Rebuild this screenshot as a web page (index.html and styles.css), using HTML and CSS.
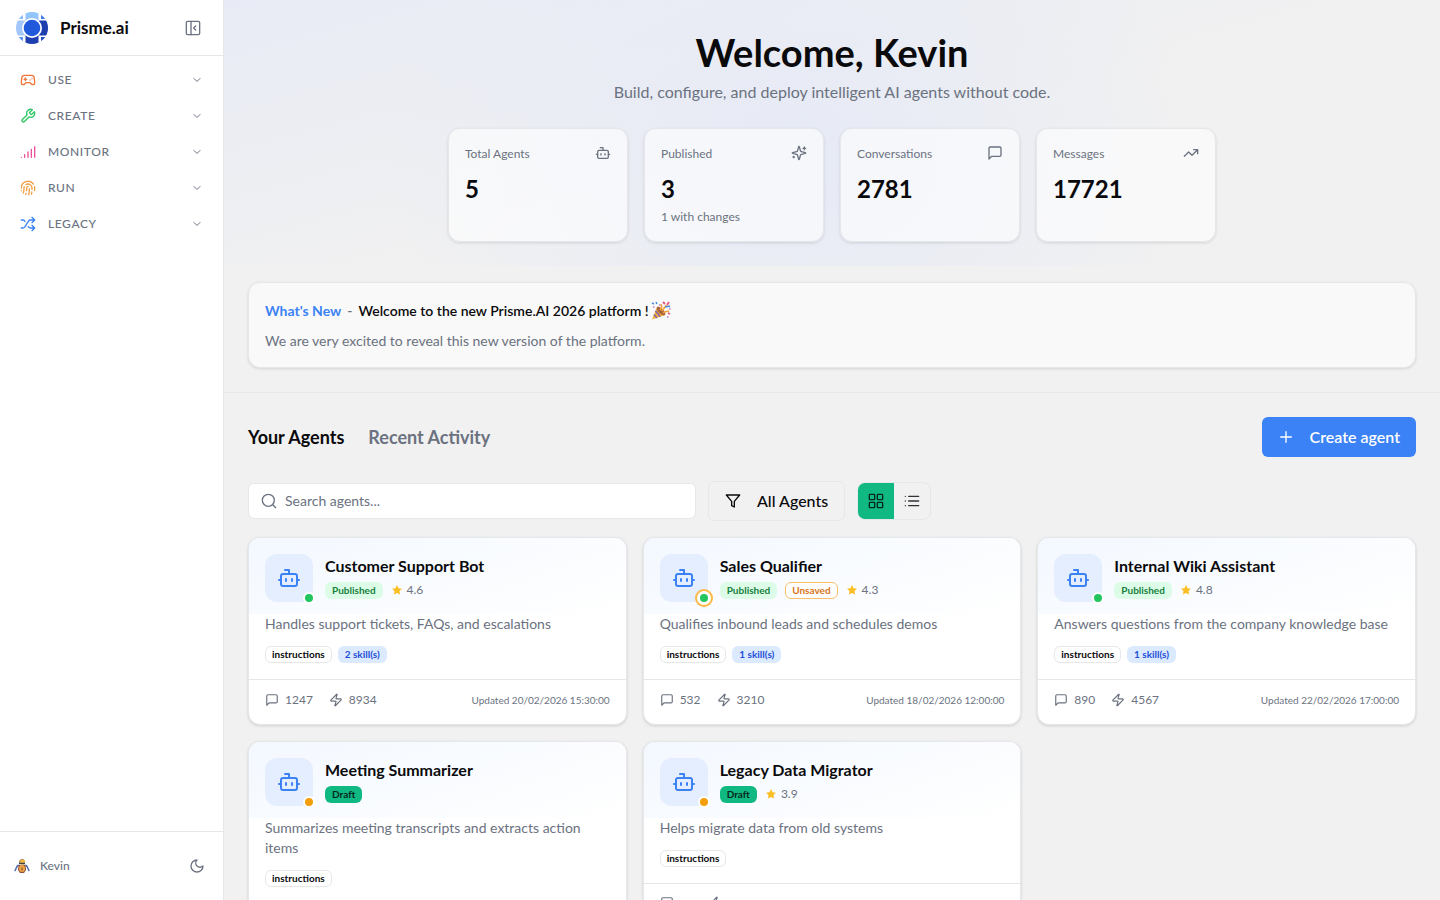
FILE: index.html
```html
<!DOCTYPE html>
<html lang="en">
<head>
<meta charset="utf-8">
<meta name="viewport" content="width=device-width, initial-scale=1">
<title>Prisme.ai</title>
<link rel="stylesheet" href="styles.css">
</head>
<body>
<svg class="sprite" aria-hidden="true">
  <symbol id="bot" viewBox="0 0 24 24"><path d="M12 8V4H8"/><rect width="16" height="12" x="4" y="8" rx="2"/><path d="M2 14h2M20 14h2M15 13v2M9 13v2"/></symbol>
  <symbol id="message" viewBox="0 0 24 24"><path d="M21 15a2 2 0 0 1-2 2H7l-4 4V5a2 2 0 0 1 2-2h14a2 2 0 0 1 2 2z"/></symbol>
  <symbol id="zap" viewBox="0 0 24 24"><path d="M4 14a1 1 0 0 1-.78-1.63l9.9-10.2a.5.5 0 0 1 .86.46l-1.92 6.02A1 1 0 0 0 13 10h7a1 1 0 0 1 .78 1.63l-9.9 10.2a.5.5 0 0 1-.86-.46l1.92-6.02A1 1 0 0 0 11 14z"/></symbol>
  <symbol id="star" viewBox="0 0 24 24"><path d="M12 2l3.1 6.3 6.9 1-5 4.9 1.200 6.800L12 17.800 5.800 21 7 14.200 2 9.300l6.900-1z" fill="currentColor"/></symbol>
  <symbol id="chevron" viewBox="0 0 24 24"><path d="m6 9 6 6 6-6"/></symbol>
</svg>
<div class="app">
  <aside class="sidebar">
    <div class="brand">
      <svg class="logo" viewBox="0 0 32 32" aria-hidden="true">
        <clipPath id="disc"><circle cx="16" cy="16" r="16"/></clipPath>
        <g clip-path="url(#disc)">
          <rect x="9.500" y="0" width="13" height="9" fill="#93c5fd"/>
          <rect x="0" y="8.500" width="9" height="15" fill="#a3c6fb"/>
          <rect x="23" y="8.500" width="9" height="15" fill="#1e3fae"/>
          <rect x="9.500" y="23" width="13" height="9" fill="#1e40af"/>
          <rect x="0" y="0" width="7" height="7" fill="#8ebcfb"/>
          <rect x="25" y="0" width="7" height="7" fill="#3f78e8"/>
          <rect x="0" y="25" width="7" height="7" fill="#5b93f2"/>
          <rect x="25" y="25" width="7" height="7" fill="#2450c4"/>
        </g>
        <circle cx="16" cy="16" r="10" fill="#fff"/>
        <circle cx="16" cy="16" r="8.300" fill="#2159dd"/>
      </svg>
      <span class="brand-name">Prisme.ai</span>
      <button class="icon-button" type="button" aria-label="Collapse sidebar"><svg class="icon" viewBox="0 0 24 24"><rect width="20" height="20" x="2" y="2" rx="2"/><path d="M9 2v20M16 15l-3-3 3-3"/></svg></button>
    </div>
    <nav class="nav">
      <button class="nav-item" type="button"><svg class="icon orange" viewBox="0 0 24 24"><path d="M6 11h4M8 9v4M15 12h.01M18 10h.01"/><path d="M17.320 5H6.680a4 4 0 0 0-3.978 3.590C2.604 9.416 2 14.456 2 16a3 3 0 0 0 3 3c1 0 1.500-.5 2-1l1.414-1.414A2 2 0 0 1 9.828 16h4.344a2 2 0 0 1 1.414.586L17 18c.5.5 1 1 2 1a3 3 0 0 0 3-3c0-1.545-.604-6.584-.7-7.410A4 4 0 0 0 17.320 5z"/></svg><span>USE</span><svg class="icon chevron"><use href="#chevron"/></svg></button>
      <button class="nav-item" type="button"><svg class="icon green" viewBox="0 0 24 24"><path d="M14.700 6.300a1 1 0 0 0 0 1.400l1.600 1.600a1 1 0 0 0 1.400 0l3.770-3.770a6 6 0 0 1-7.940 7.940l-6.910 6.910a2.120 2.120 0 0 1-3-3l6.910-6.910a6 6 0 0 1 7.940-7.940z"/></svg><span>CREATE</span><svg class="icon chevron"><use href="#chevron"/></svg></button>
      <button class="nav-item" type="button"><svg class="icon pink" viewBox="0 0 24 24"><path d="M2 20h.01M7 20v-4M12 20v-8M17 20V8M22 4v16"/></svg><span>MONITOR</span><svg class="icon chevron"><use href="#chevron"/></svg></button>
      <button class="nav-item" type="button"><svg class="icon amber" viewBox="0 0 24 24"><path d="M12 10a2 2 0 0 0-2 2c0 1.020-.1 2.510-.26 4M14 13.120c0 2.380 0 6.380-1 8.880M17.290 21.020c.12-.6.430-2.300.5-3.020M2 12a10 10 0 0 1 18-6M2 16h.01M21.800 16c.2-2 .131-5.354 0-6M5 19.500C5.500 18 6 15 6 12a6 6 0 0 1 .34-2M8.650 22c.21-.66.450-1.320.570-2M9 6.800a6 6 0 0 1 9 5.200v2"/></svg><span>RUN</span><svg class="icon chevron"><use href="#chevron"/></svg></button>
      <button class="nav-item" type="button"><svg class="icon blue" viewBox="0 0 24 24"><path d="m18 14 4 4-4 4M18 2l4 4-4 4M2 18h1.973a4 4 0 0 0 3.300-1.700l5.454-8.600a4 4 0 0 1 3.300-1.700H22M2 6h1.972a4 4 0 0 1 3.600 2.200M22 18h-6.041a4 4 0 0 1-3.300-1.800l-.359-.45"/></svg><span>LEGACY</span><svg class="icon chevron"><use href="#chevron"/></svg></button>
    </nav>
    <div class="account">
      <svg class="avatar" viewBox="0 0 16 16" aria-hidden="true"><path d="M5 5C5 2 6.500 1 8.200 1S11 2.500 11 5z" fill="#8a7352"/><circle cx="8.500" cy="4" r="2.600" fill="#f2b63d"/><path d="M5 5.500h6" stroke="#3d4250" stroke-width="1.500"/><path d="M4.500 7C2 8 2.500 11 .7 13M11.500 7c2.500 1 2 4 3.800 6" stroke="#4866ae" stroke-width="1.400" fill="none"/><path d="M4.500 7h7l.5 5-2 3H6l-2-3z" fill="#8b4f3e"/><ellipse cx="8" cy="10.500" rx="3" ry="3.500" fill="#f2a642"/><path d="M8 9.500v3" stroke="#743c37"/></svg>
      <span class="account-name">Kevin</span>
      <button class="icon-button" type="button" aria-label="Dark mode"><svg class="icon" viewBox="0 0 24 24"><path d="M12 3a6 6 0 0 0 9 9 9 9 0 1 1-9-9Z"/></svg></button>
    </div>
  </aside>
  <main class="main">
    <header class="hero">
      <h1>Welcome, Kevin</h1>
      <p class="tagline">Build, configure, and deploy intelligent AI agents without code.</p>
      <div class="stats">
        <section class="stat"><div class="stat-head"><span>Total Agents</span><svg class="icon"><use href="#bot"/></svg></div><strong>5</strong></section>
        <section class="stat"><div class="stat-head"><span>Published</span><svg class="icon" viewBox="0 0 24 24"><path d="M9.937 15.500A2 2 0 0 0 8.500 14.063l-6.135-1.582a.5.5 0 0 1 0-.962L8.500 9.936A2 2 0 0 0 9.937 8.500l1.582-6.135a.5.5 0 0 1 .963 0L14.063 8.500A2 2 0 0 0 15.500 9.937l6.135 1.581a.5.5 0 0 1 0 .964L15.500 14.063a2 2 0 0 0-1.437 1.437l-1.582 6.135a.5.5 0 0 1-.963 0zM20 3v4M22 5h-4M4 17v2M5 18H3"/></svg></div><strong>3</strong><small>1 with changes</small></section>
        <section class="stat"><div class="stat-head"><span>Conversations</span><svg class="icon"><use href="#message"/></svg></div><strong>2781</strong></section>
        <section class="stat"><div class="stat-head"><span>Messages</span><svg class="icon" viewBox="0 0 24 24"><path d="m22 7-8.500 8.500-5-5L2 17M16 7h6v6"/></svg></div><strong>17721</strong></section>
      </div>
    </header>
    <div class="news-wrap">
      <section class="news">
        <h2><span class="news-label">What's New</span><span class="dash">-</span><span>Welcome to the new Prisme.AI 2026 platform !</span><svg class="party" viewBox="0 0 20 20" role="img" aria-label="Party popper"><path d="M6 6 1 18.500 14 14z" fill="#f9b52f"/><path d="m4.500 9.800 4.800 5.900M3 13.500l3 3.500" stroke="#8b62a8" stroke-width="1.800"/><ellipse cx="10" cy="10" rx="2.600" ry="5.600" transform="rotate(-45 10 10)" fill="#a8653f"/><path d="M9 9c2-2 2-4 1-6M11 10c1-3 4-3 4-6M12 12c2-2 4-1 6-2" stroke="#f5a33c" stroke-width="1.600" fill="none"/><path d="M1 2l2 1M5 1l1 2M14 6c2-1 3 0 5-1" stroke="#4c8fd8" stroke-width="1.600" fill="none"/><path d="M12 1l2 2M18 1l-2 3M17 12l2 1" stroke="#e2557c" stroke-width="1.800"/><path d="M2 6h1.500M16 16h1.500M8 4h1.500M18 8h1.500" stroke="#c77cc5" stroke-width="1.500"/></svg></h2>
        <p>We are very excited to reveal this new version of the platform.</p>
      </section>
    </div>
    <section class="content">
      <div class="heading-row">
        <div class="tabs"><button class="tab active" type="button">Your Agents</button><button class="tab" type="button">Recent Activity</button></div>
        <button class="create" type="button"><svg class="icon" viewBox="0 0 24 24"><path d="M4 12h16M12 4v16"/></svg>Create agent</button>
      </div>
      <div class="toolbar">
        <label class="search"><svg class="icon" viewBox="0 0 24 24"><circle cx="11" cy="11" r="9"/><path d="m22 22-4.300-4.300"/></svg><input type="text" placeholder="Search agents..." aria-label="Search agents"></label>
        <button class="filter" type="button"><svg class="icon" viewBox="0 0 24 24"><path d="M22 3H2l8 9.460V19l4 2v-8.540z"/></svg>All Agents</button>
        <div class="views">
          <button class="view on" type="button" aria-label="Grid view"><svg class="icon" viewBox="0 0 24 24"><rect x="2" y="2" width="8" height="8" rx="1"/><rect x="14" y="2" width="8" height="8" rx="1"/><rect x="14" y="14" width="8" height="8" rx="1"/><rect x="2" y="14" width="8" height="8" rx="1"/></svg></button>
          <button class="view" type="button" aria-label="List view"><svg class="icon" viewBox="0 0 24 24"><path d="M2 5h.01M2 12h.01M2 19h.01M7 5h15M7 12h15M7 19h15"/></svg></button>
        </div>
      </div>
      <div class="grid">
        <article class="card">
          <div class="card-head"><div class="bot"><svg class="icon"><use href="#bot"/></svg><i class="dot live"></i></div><div class="card-title"><h3>Customer Support Bot</h3><div class="meta"><span class="badge published">Published</span><span class="rating"><svg class="star"><use href="#star"/></svg>4.6</span></div></div></div>
          <div class="card-body"><p>Handles support tickets, FAQs, and escalations</p><div class="tags"><span class="badge outline">instructions</span><span class="badge skill">2 skill(s)</span></div></div>
          <footer class="card-foot"><span class="count"><svg class="icon"><use href="#message"/></svg>1247</span><span class="count"><svg class="icon"><use href="#zap"/></svg>8934</span><time>Updated 20/02/2026 15:30:00</time></footer>
        </article>
        <article class="card">
          <div class="card-head"><div class="bot"><svg class="icon"><use href="#bot"/></svg><i class="dot live changed"></i></div><div class="card-title"><h3>Sales Qualifier</h3><div class="meta"><span class="badge published">Published</span><span class="badge unsaved">Unsaved</span><span class="rating"><svg class="star"><use href="#star"/></svg>4.3</span></div></div></div>
          <div class="card-body"><p>Qualifies inbound leads and schedules demos</p><div class="tags"><span class="badge outline">instructions</span><span class="badge skill">1 skill(s)</span></div></div>
          <footer class="card-foot"><span class="count"><svg class="icon"><use href="#message"/></svg>532</span><span class="count"><svg class="icon"><use href="#zap"/></svg>3210</span><time>Updated 18/02/2026 12:00:00</time></footer>
        </article>
        <article class="card">
          <div class="card-head"><div class="bot"><svg class="icon"><use href="#bot"/></svg><i class="dot live"></i></div><div class="card-title"><h3>Internal Wiki Assistant</h3><div class="meta"><span class="badge published">Published</span><span class="rating"><svg class="star"><use href="#star"/></svg>4.8</span></div></div></div>
          <div class="card-body"><p>Answers questions from the company knowledge base</p><div class="tags"><span class="badge outline">instructions</span><span class="badge skill">1 skill(s)</span></div></div>
          <footer class="card-foot"><span class="count"><svg class="icon"><use href="#message"/></svg>890</span><span class="count"><svg class="icon"><use href="#zap"/></svg>4567</span><time>Updated 22/02/2026 17:00:00</time></footer>
        </article>
        <article class="card">
          <div class="card-head"><div class="bot"><svg class="icon"><use href="#bot"/></svg><i class="dot"></i></div><div class="card-title"><h3>Meeting Summarizer</h3><div class="meta"><span class="badge draft">Draft</span></div></div></div>
          <div class="card-body"><p>Summarizes meeting transcripts and extracts action items</p><div class="tags"><span class="badge outline">instructions</span></div></div>
          <footer class="card-foot"><span class="count"><svg class="icon"><use href="#message"/></svg></span><span class="count"><svg class="icon"><use href="#zap"/></svg></span></footer>
        </article>
        <article class="card">
          <div class="card-head"><div class="bot"><svg class="icon"><use href="#bot"/></svg><i class="dot"></i></div><div class="card-title"><h3>Legacy Data Migrator</h3><div class="meta"><span class="badge draft">Draft</span><span class="rating"><svg class="star"><use href="#star"/></svg>3.9</span></div></div></div>
          <div class="card-body"><p>Helps migrate data from old systems</p><div class="tags"><span class="badge outline">instructions</span></div></div>
          <footer class="card-foot"><span class="count count-empty"><svg class="icon"><use href="#message"/></svg></span><span class="count"><svg class="icon"><use href="#zap"/></svg></span></footer>
        </article>
      </div>
    </section>
  </main>
</div>
</body>
</html>
```
FILE: styles.css
```css
*, *::before, *::after { box-sizing: border-box; }
body { margin: 0; font-family: Lato, "Liberation Sans", sans-serif; font-size: 14px; line-height: 20px; color: #0a0a0c; background: #f1f1f1; }
h1, h2, h3, p { margin: 0; }
button, input { font: inherit; color: inherit; }
button { padding: 0; border: 0; background: none; cursor: pointer; }
.sprite { position: absolute; width: 0; height: 0; }
.icon { flex: none; width: 16px; height: 16px; fill: none; stroke: currentColor; stroke-width: 2; stroke-linecap: round; stroke-linejoin: round; }
.app { display: flex; height: 100vh; }

.sidebar { display: flex; flex-direction: column; flex: none; width: 224px; background: #fff; border-right: 1px solid #e5e7eb; }
.brand { display: flex; align-items: center; gap: 12px; height: 56px; padding: 0 22px 0 16px; border-bottom: 1px solid #e5e7eb; }
.logo { width: 32px; height: 32px; }
.brand-name { flex: 1; font-size: 17px; font-weight: 700; }
.icon-button { display: flex; color: #6b7280; }
.nav { flex: 1; padding: 6px 8px; }
.nav-item { display: flex; align-items: center; gap: 12px; width: 100%; height: 36px; padding: 0 12px; color: #6b7280; font-size: 12px; font-weight: 500; letter-spacing: 0.05em; text-align: left; }
.nav-item span { flex: 1; }
.nav-item .chevron { width: 12px; height: 12px; }
.orange { color: #f07438; }
.green { color: #2fc565; }
.pink { color: #e8519a; }
.amber { color: #f2a044; }
.blue { color: #3b82f6; }
.account { display: flex; align-items: center; gap: 10px; height: 69px; padding: 0 18px 0 14px; border-top: 1px solid #e5e7eb; color: #6b7280; }
.avatar { width: 16px; height: 16px; }
.account-name { flex: 1; font-size: 12px; font-weight: 500; }

.main { flex: 1; min-width: 0; overflow-y: auto; scrollbar-width: none; }
.hero { padding: 32px 24px 24px; text-align: center; background: linear-gradient(165deg, #e9ecf6 0%, #f1f1f1 40%, #f1f1f1 100%); background: radial-gradient(ellipse 34% 110% at 47% 60%, #e6eaf6 0%, rgba(230, 234, 246, 0) 100%), linear-gradient(165deg, #e8ebf5 0%, #f1f1f1 55%); }
h1 { font-size: 38px; line-height: 40px; font-weight: 700; }
.tagline { margin-top: 8px; font-size: 16px; line-height: 24px; color: #6b7280; }
.stats { display: grid; grid-template-columns: repeat(4, 1fr); gap: 16px; max-width: 768px; margin: 24px auto 0; text-align: left; }
.stat { padding: 16px; min-height: 114px; border: 1px solid #e5e7eb; border-radius: 12px; background: rgba(255, 255, 255, 0.6); box-shadow: 0 1px 3px rgba(0, 0, 0, 0.12); }
.stat-head { display: flex; justify-content: space-between; height: 20px; font-size: 12px; line-height: 18px; color: #6b7280; }
.stat strong { display: block; margin-top: 8px; font-size: 24px; line-height: 32px; }
.stat small { display: block; margin-top: 4px; font-size: 12px; line-height: 16px; color: #6b7280; }
.news-wrap { padding: 16px 24px 24px; border-bottom: 1px solid #e5e7eb; }
.news { padding: 16px; border: 1px solid #e5e7eb; border-radius: 12px; background: #f9f9f9; box-shadow: 0 1px 3px rgba(0, 0, 0, 0.12); }
.news h2 { display: flex; align-items: center; font-size: 14px; line-height: 24px; font-weight: 600; }
.news-label { color: #3b82f6; font-weight: 700; }
.dash { margin: 0 6px; color: #6b7280; }
.party { width: 20px; height: 20px; margin-left: 2px; }
.news p { margin-top: 8px; color: #6b7280; }

.content { padding: 24px; }
.heading-row { display: flex; align-items: center; justify-content: space-between; }
.tabs { display: flex; gap: 24px; }
.tab { font-size: 18px; line-height: 28px; font-weight: 700; color: #6b7280; }
.tab.active { color: #0a0a0c; }
.create { display: flex; align-items: center; gap: 16px; height: 40px; padding: 0 16px; border-radius: 6px; background: #3b82f6; color: #fff; font-size: 16px; font-weight: 600; }
.toolbar { display: flex; align-items: center; gap: 12px; margin: 24px 0 16px; }
.search { display: flex; align-items: center; gap: 8px; flex: 0 1 448px; height: 36px; padding: 0 12px; border: 1px solid #e5e7eb; border-radius: 6px; background: #fff; color: #6b7280; }
.search input { flex: 1; min-width: 0; padding: 0; border: 0; outline: 0; background: none; }
.search input::placeholder { color: #6b7280; opacity: 1; }
.filter { display: flex; align-items: center; gap: 16px; height: 40px; padding: 0 16px; border: 1px solid #e5e7eb; border-radius: 6px; font-size: 16px; font-weight: 500; }
.views { display: flex; overflow: hidden; border: 1px solid #e5e7eb; border-radius: 8px; }
.view { display: flex; align-items: center; justify-content: center; width: 36px; height: 36px; color: #303236; }
.view.on { background: #10b981; color: #06281e; }

.grid { display: grid; grid-template-columns: repeat(3, minmax(0, 1fr)); gap: 16px; }
.card { overflow: hidden; border: 1px solid #e5e7eb; border-radius: 12px; background: #fff; box-shadow: 0 1px 3px rgba(0, 0, 0, 0.14); }
.card-head { display: flex; gap: 12px; padding: 16px 16px 12px; background: linear-gradient(160deg, #f3f8ff, #fff); }
.bot { position: relative; display: flex; align-items: center; justify-content: center; flex: none; width: 48px; height: 48px; border-radius: 12px; background: #e5eefe; color: #3b82f6; }
.bot .icon { width: 24px; height: 24px; }
.dot { position: absolute; right: -2px; bottom: -2px; width: 12px; height: 12px; border: 2px solid #fff; border-radius: 50%; background: #f59e0b; }
.dot.live { background: #22c55e; }
.dot.changed { box-shadow: 0 0 0 2px #fff, 0 0 0 4px #fbbf4a; box-shadow: 0 0 0 1px #fff, 0 0 0 3px #fbb945; }
.card-title { min-width: 0; }
h3 { font-size: 16px; line-height: 24px; font-weight: 700; white-space: nowrap; }
.meta { display: flex; align-items: center; gap: 8px; height: 18px; margin-top: 3px; }
.badge { display: inline-flex; align-items: center; height: 17px; padding: 0 6px; border: 1px solid transparent; border-radius: 6px; font-size: 10px; line-height: 15px; font-weight: 700; white-space: nowrap; }
.published { background: #dcfce7; color: #15803d; }
.unsaved { border-color: #fbbf6a; background: #fff; color: #d9741a; }
.draft { background: #10b981; color: #06281e; }
.outline { border-color: #e5e7eb; background: #fff; }
.skill { background: #dbeafe; color: #1d4ed8; }
.rating { display: flex; align-items: center; gap: 4px; font-size: 12px; color: #6b7280; }
.star { width: 12px; height: 12px; color: #fbbf24; }
.card-body { padding: 0 16px 16px; }
.card-body p { color: #6b7280; }
.tags { display: flex; gap: 6px; margin-top: 12px; }
.card-foot { display: flex; align-items: center; gap: 16px; padding: 12px 16px 16px; border-top: 1px solid #e5e7eb; color: #6b7280; font-size: 12px; line-height: 16px; }
.count { display: flex; align-items: center; gap: 6px; }
.count .icon { width: 14px; height: 14px; }
.count-empty { padding-right: 19px; }
.card-foot time { margin-left: auto; font-size: 10px; }
```
